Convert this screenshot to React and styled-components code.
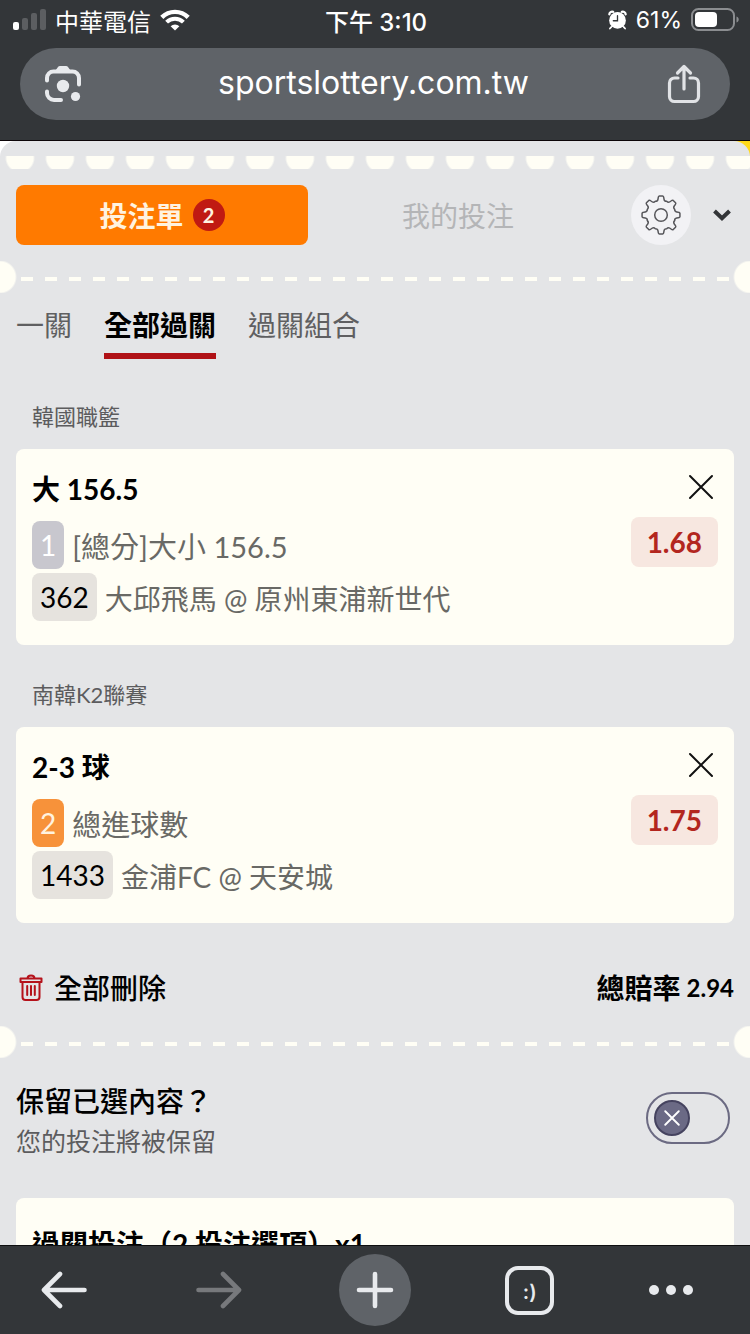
import React, { useState } from 'react';
import styled, { createGlobalStyle } from 'styled-components';

const GlobalStyle = createGlobalStyle`
  * {
    box-sizing: border-box;
  }

  body {
    margin: 0;
    background-color: #333639;
    font-family: Lato, 'Noto Sans CJK TC', sans-serif;
  }

  button {
    padding: 0;
    border: none;
    background: none;
    color: inherit;
    font: inherit;
    cursor: pointer;
  }

  svg {
    display: block;
  }
`;

const Screen = styled.div`
  display: flex;
  flex-direction: column;
  height: 100vh;
`;

const BrowserTop = styled.header`
  padding-bottom: 20px;
  border-bottom: 1px solid #0c0508;
  background-color: #333639;
  color: #fff;
  font-family: Inter, 'Noto Sans CJK TC', sans-serif;
`;

const StatusBar = styled.div`
  display: grid;
  grid-template-columns: 1fr auto 1fr;
  align-items: center;
  height: 40px;
  margin-bottom: 8px;
  padding: 0 11px 0 13px;
  font-size: 24px;
`;

const StatusGroup = styled.div`
  display: flex;
  align-items: center;
  justify-content: ${({ $end }) => $end ? 'flex-end' : 'flex-start'};
  gap: 9px;
`;

const Clock = styled.time`
  font-weight: 500;
`;

const BatteryLevel = styled.span`
  font-size: 23px;
`;

const Omnibox = styled.div`
  display: flex;
  align-items: center;
  justify-content: space-between;
  height: 72px;
  margin: 0 20px;
  padding: 0 24px 0 21px;
  border-radius: 36px;
  background-color: #5f6368;
`;

const Address = styled.span`
  padding-bottom: 2px;
  font-size: 32px;
  line-height: 40px;
`;

const Page = styled.main`
  flex: 1;
  min-height: 0;
  overflow-y: auto;
  scrollbar-width: none;
  background: linear-gradient(to right, #fff 50%, #ffd91a 50%);
`;

const Panel = styled.div`
  min-height: 100%;
  padding-top: 15px;
  border-radius: 16px 16px 0 0;
  background-color: #e4e5e7;
`;

const Scallops = styled.div`
  height: 13px;
  background: radial-gradient(circle at 20px 2px, #fffef5 13px, transparent 15px) 0 0 / 40px 13px repeat-x;
`;

const SlipHeader = styled.div`
  display: flex;
  align-items: center;
  padding: 16px;
`;

const SlipTabs = styled.div`
  display: flex;
  flex: 1;
  gap: 4px;
  margin-right: 27px;
`;

const SlipTab = styled.button`
  display: flex;
  flex: 1;
  align-items: center;
  justify-content: center;
  gap: 9px;
  height: 60px;
  border-radius: 8px;

  && {
    background-color: ${({ $active }) => $active ? '#ff7a00' : 'transparent'};
    color: ${({ $active }) => $active ? '#fff3e0' : '#b4b5b7'};
    font-size: 28px;
    font-weight: ${({ $active }) => $active ? 700 : 400};
  }
`;

const Count = styled.span`
  width: 32px;
  border-radius: 16px;
  background-color: #c01a12;
  font-size: 20px;
  line-height: 32px;
`;

const SettingsButton = styled.button`
  && {
    display: grid;
    place-items: center;
    width: 60px;
    height: 60px;
    margin-right: 19px;
    border-radius: 50%;
    background-color: #f2f2f5;
  }
`;

const CollapseButton = styled.button`
  display: grid;
  place-items: center;
  width: 24px;
  height: 60px;
`;

const TearLine = styled.div`
  display: flex;
  align-items: center;
  height: 32px;
  background:
    radial-gradient(circle at 0 50%, #fffef5 15px, transparent 17px),
    radial-gradient(circle at 100% 50%, #fffef5 15px, transparent 17px);

  &::before {
    content: '';
    flex: 1;
    height: 4px;
    margin: 4px 21px 0;
    background: repeating-linear-gradient(to right, #fffef5 0 12px, transparent 12px 24px);
  }
`;

const ModeTabs = styled.nav`
  display: flex;
  gap: 32px;
  padding: 12px 16px 0;
`;

const ModeTab = styled.button`
  && {
    padding-bottom: 8px;
    border-bottom: 6px solid ${({ $active }) => $active ? '#b01217' : 'transparent'};
    color: ${({ $active }) => $active ? '#000' : '#5f5f61'};
    font-size: 28px;
    font-weight: ${({ $active }) => $active ? 700 : 400};
    line-height: 40px;
  }
`;

const Bets = styled.div`
  display: flex;
  flex-direction: column;
  gap: 34px;
  padding: 42px 16px 0;
`;

const League = styled.h2`
  margin: 0 16px 16px;
  color: #5c5c5e;
  font-size: 22px;
  font-weight: 400;
  line-height: 32px;
`;

const Card = styled.article`
  display: flex;
  justify-content: space-between;
  padding: 16px 16px 24px;
  border-radius: 8px;
  background-color: #fffef5;
`;

const Pick = styled.h3`
  margin: 0 0 8px;
  font-size: 28px;
  font-weight: 700;
  line-height: 48px;
`;

const Line = styled.div`
  display: flex;
  gap: 8px;
  height: 48px;
  margin-top: 4px;
  line-height: 48px;
`;

const LineText = styled.span`
  padding-top: 2px;
  color: #696965;
  font-size: ${({ $large }) => $large ? 29 : 28}px;
`;

const tagColors = {
  grey: ['#c8c7ce', '#fff'],
  orange: ['#f7923a', '#fff3e0'],
  sand: ['#e6e3de', '#000'],
};

const Tag = styled.span`
  padding: 0 8px;
  border-radius: 8px;
  background-color: ${({ $tone }) => tagColors[$tone][0]};
  color: ${({ $tone }) => tagColors[$tone][1]};
  font-size: 28px;
`;

const CardSide = styled.div`
  display: flex;
  flex-direction: column;
  align-items: flex-end;
  gap: 8px;
`;

const CloseButton = styled.button`
  display: grid;
  place-items: center;
  width: 34px;
  height: 44px;
`;

const Odds = styled.span`
  padding: 0 16px;
  border-radius: 8px;
  background-color: #f7e7e0;
  color: #b3261e;
  font-size: 28px;
  font-weight: 700;
  line-height: 50px;
`;

const Totals = styled.div`
  display: flex;
  align-items: center;
  justify-content: space-between;
  height: 40px;
  margin: 45px 16px 18px;
  font-size: 28px;
  line-height: 40px;
`;

const ClearButton = styled.button`
  display: flex;
  align-items: center;
  gap: 8px;

  && {
    font-weight: 500;
  }
`;

const TotalOdds = styled.strong`
  display: flex;
  gap: 6px;

  span {
    font-size: 24px;
  }
`;

const KeepRow = styled.label`
  display: flex;
  align-items: center;
  justify-content: space-between;
  padding: 23px 20px 37px 16px;
  line-height: 40px;
`;

const KeepTitle = styled.div`
  font-size: 28px;
  font-weight: 500;
`;

const KeepHint = styled.div`
  color: #5c5c5e;
  font-size: 25px;
`;

const Switch = styled.span`
  display: flex;
  align-items: center;
  width: 84px;
  height: 52px;
  margin-bottom: 6px;
  padding: 0 6px;
  border: 2px solid #6b6a82;
  border-radius: 26px;

  input {
    position: absolute;
    opacity: 0;
  }
`;

const Knob = styled.span`
  display: grid;
  place-items: center;
  width: 36px;
  height: 36px;
  margin-left: ${({ $on }) => $on ? 'auto' : '0'};
  border: 2px solid #45435f;
  border-radius: 50%;
  background-color: #6b6a85;
`;

const StakeCard = styled.section`
  margin: 0 16px;
  padding: 22px 16px;
  border-radius: 8px 8px 0 0;
  background-color: #fffef5;
`;

const Toolbar = styled.nav`
  display: flex;
  flex-shrink: 0;
  align-items: center;
  justify-content: space-between;
  height: 89px;
  padding: 0 57px 0 28px;
  border-top: 1px solid #0e0f10;
  background-color: #333639;
  color: #e8eaed;
`;

const ToolButton = styled.button`
  display: grid;
  place-items: center;
  width: ${({ $narrow }) => $narrow ? 44 : 72}px;
  height: 72px;
  border-radius: 50%;

  && {
    background-color: ${({ $filled }) => $filled ? '#5f6368' : 'transparent'};
  }

  &:disabled {
    color: #77797c;
  }
`;

const TabCount = styled.span`
  width: 49px;
  height: 49px;
  border: 4px solid #e8eaed;
  border-radius: 13px;
  font-family: Inter, sans-serif;
  font-size: 20px;
  font-weight: 600;
  line-height: 44px;
`;

const bets = [
  {
    league: '韓國職籃',
    pick: '大 156.5',
    order: 1,
    tone: 'grey',
    market: '[總分]大小 156.5',
    code: '362',
    match: '大邱飛馬 @ 原州東浦新世代',
    odds: '1.68',
  },
  {
    league: '南韓K2聯賽',
    pick: '2-3 球',
    order: 2,
    tone: 'orange',
    market: '總進球數',
    code: '1433',
    match: '金浦FC @ 天安城',
    odds: '1.75',
  },
];

const modes = ['一關', '全部過關', '過關組合'];

const SignalIcon = () => (
  <svg width="33" height="22" viewBox="0 0 33 22" fill="#5c5e61">
    <rect x="0" y="13" width="6" height="8" rx="2" fill="#fff" />
    <rect x="9" y="9" width="6" height="12" rx="2" />
    <rect x="18" y="4" width="6" height="17" rx="2" />
    <rect x="27" y="0" width="6" height="21" rx="2" />
  </svg>
);

const WifiIcon = () => (
  <svg width="30" height="22" viewBox="0 0 30 22" fill="none" stroke="#fff">
    <path d="M1.8 8.4a18.6 18.6 0 0 1 26.4 0" strokeWidth="4.4" />
    <path d="M6.6 13.2a11.9 11.9 0 0 1 16.8 0" strokeWidth="4" />
    <path d="M15 21.6l-4.4-4.4a6.3 6.3 0 0 1 8.8 0z" fill="#fff" stroke="none" />
  </svg>
);

const AlarmIcon = () => (
  <svg width="19" height="20" viewBox="0 0 20 20" fill="none">
    <circle cx="10" cy="10.4" r="8.8" fill="#fff" />
    <path d="M1.4 4A3 3 0 0 1 5.4 1.4M18.6 4A3 3 0 0 0 14.6 1.4" stroke="#fff" strokeWidth="2.4" strokeLinecap="round" />
    <path d="M3.6 17.2L2 19M16.4 17.2L18 19" stroke="#fff" strokeWidth="1.8" strokeLinecap="round" />
    <path d="M10 5.4v5.4H5.6" stroke="#333639" strokeWidth="1.4" strokeLinecap="round" />
  </svg>
);

const BatteryIcon = () => (
  <svg width="48" height="24" viewBox="0 0 48 24" fill="none">
    <rect x="1" y="1" width="42" height="21" rx="6.5" stroke="#8b8d90" strokeWidth="2" />
    <rect x="4" y="4" width="22" height="15" rx="4" fill="#fff" />
    <path d="M45.5 8.5c1.6.6 2.2 1.6 2.2 3s-.6 2.4-2.2 3z" fill="#8b8d90" />
  </svg>
);

const LensIcon = () => (
  <svg width="44" height="38" viewBox="-3 0 44 38" fill="none" stroke="#e8eaed" strokeWidth="4" strokeLinecap="round">
    <path d="M3 15.5V13a6.500 6.500 0 0 1 6.500-6.500h19A6.500 6.500 0 0 1 35 13v6.500" />
    <path d="M3 26.500V28a7 7 0 0 0 7 7h7" />
    <path d="M11.500 5.500l2.300-3.300Q14.600 1 16 1h6q1.400 0 2.200 1.200l2.300 3.300z" fill="#e8eaed" stroke="none" />
    <circle cx="19" cy="21" r="6.200" fill="#e8eaed" stroke="none" />
    <circle cx="31.5" cy="31.5" r="4.600" fill="#e8eaed" stroke="none" />
  </svg>
);

const ShareIcon = () => (
  <svg width="44" height="40" viewBox="0 0 44 40" fill="none" stroke="#e1e3e6" strokeWidth="3.2" strokeLinecap="round" strokeLinejoin="round">
    <path d="M16 14h-3.5a5 5 0 0 0-5 5v13.5a5 5 0 0 0 5 5h19a5 5 0 0 0 5-5V19a5 5 0 0 0-5-5H28" />
    <path d="M22 25V3M15.5 9L22 2.5 28.5 9" />
  </svg>
);

const gearTeeth = [0, 45, 90, 135, 180, 225, 270, 315];

// one tooth and the valley after it, repeated round the hub
const gearPath = () => {
  const at = (deg, r) => {
    const a = ((deg - 90) * Math.PI) / 180;
    return `${(20 + r * Math.cos(a)).toFixed(2)} ${(20 + r * Math.sin(a)).toFixed(2)}`;
  };
  const parts = gearTeeth.map((t, i) =>
    `${i ? 'L' : 'M'}${at(t - 5, 19)} L${at(t + 5, 19)} Q${at(t + 8, 19)} ${at(t + 9, 17.6)}` +
    ` L${at(t + 11, 16)} Q${at(t + 14, 14)} ${at(t + 22.5, 14.8)} Q${at(t + 31, 14)} ${at(t + 34, 16)}` +
    ` L${at(t + 36, 17.6)} Q${at(t + 37, 19)} ${at(t + 40, 19)}`
  );
  return parts.join(' ') + ' Z';
};

const GearIcon = () => (
  <svg width="40" height="40" viewBox="0 0 40 40" fill="none" stroke="#57575b" strokeWidth="1.5">
    <path d={gearPath()} strokeLinejoin="round" />
    <circle cx="20" cy="20" r="6.3" />
  </svg>
);

const ChevronIcon = () => (
  <svg width="20" height="14" viewBox="0 0 20 14" fill="none" stroke="#333538" strokeWidth="4">
    <path d="M2.5 3L10 10.2 17.5 3" />
  </svg>
);

const CrossIcon = ({ size = 26, color = '#111', weight = 2 }) => (
  <svg width={size} height={size} viewBox="0 0 26 26" fill="none" stroke={color} strokeWidth={weight} strokeLinecap="round">
    <path d="M2 2l22 22M24 2L2 24" />
  </svg>
);

const TrashIcon = () => (
  <svg width="30" height="28" viewBox="0 0 30 28" fill="none" stroke="#b5121b" strokeWidth="2" strokeLinejoin="round">
    <path d="M4.500 4.500h21v3.500h-21zM11.500 4.500c0-4 7-4 7 0" />
    <path d="M6.5 8v15a3 3 0 0 0 3 3h11a3 3 0 0 0 3-3V8" />
    <path d="M11.2 12v9M15 12v9M18.800 12v9" strokeLinecap="round" />
  </svg>
);

const ArrowIcon = ({ flip }) => (
  <svg width="46" height="38" viewBox="0 0 46 38" fill="none" stroke="currentColor" strokeWidth="4.6" strokeLinecap="round" strokeLinejoin="round">
    <path d={flip ? 'M2.5 19h40M27 3l16 16-16 16' : 'M43.5 19h-40M19 3L3 19l16 16'} />
  </svg>
);

const PlusIcon = () => (
  <svg width="38" height="38" viewBox="0 0 38 38" fill="none" stroke="currentColor" strokeWidth="4.6" strokeLinecap="round">
    <path d="M19 3v32M3 19h32" />
  </svg>
);

const DotsIcon = () => (
  <svg width="44" height="12" viewBox="0 0 44 12" fill="currentColor">
    <circle cx="5" cy="6" r="5" />
    <circle cx="22" cy="6" r="5" />
    <circle cx="39" cy="6" r="5" />
  </svg>
);

const BetCard = ({ bet }) => (
  <section>
    <League>{bet.league}</League>
    <Card>
      <div>
        <Pick>{bet.pick}</Pick>
        <Line>
          <Tag $tone={bet.tone}>{bet.order}</Tag>
          <LineText $large>{bet.market}</LineText>
        </Line>
        <Line>
          <Tag $tone="sand">{bet.code}</Tag>
          <LineText>{bet.match}</LineText>
        </Line>
      </div>
      <CardSide>
        <CloseButton aria-label="移除"><CrossIcon /></CloseButton>
        <Odds>{bet.odds}</Odds>
      </CardSide>
    </Card>
  </section>
);

const App = () => {
  const [mode, setMode] = useState('全部過關');
  const [keep, setKeep] = useState(false);

  return (
    <Screen>
      <GlobalStyle />
      <BrowserTop>
        <StatusBar>
          <StatusGroup>
            <SignalIcon />
            <span>中華電信</span>
            <WifiIcon />
          </StatusGroup>
          <Clock>下午 3:10</Clock>
          <StatusGroup $end>
            <AlarmIcon />
            <BatteryLevel>61%</BatteryLevel>
            <BatteryIcon />
          </StatusGroup>
        </StatusBar>
        <Omnibox>
          <button aria-label="Lens"><LensIcon /></button>
          <Address>sportslottery.com.tw</Address>
          <button aria-label="分享"><ShareIcon /></button>
        </Omnibox>
      </BrowserTop>

      <Page>
        <Panel>
          <Scallops />
          <SlipHeader>
            <SlipTabs>
              <SlipTab $active>投注單<Count>2</Count></SlipTab>
              <SlipTab>我的投注</SlipTab>
            </SlipTabs>
            <SettingsButton aria-label="設定"><GearIcon /></SettingsButton>
            <CollapseButton aria-label="收合"><ChevronIcon /></CollapseButton>
          </SlipHeader>
          <TearLine />
          <ModeTabs>
            {modes.map((name) => (
              <ModeTab key={name} $active={name === mode} onClick={() => setMode(name)}>{name}</ModeTab>
            ))}
          </ModeTabs>
          <Bets>
            {bets.map((bet) => <BetCard key={bet.code} bet={bet} />)}
          </Bets>
          <Totals>
            <ClearButton><TrashIcon />全部刪除</ClearButton>
            <TotalOdds>總賠率 <span>2.94</span></TotalOdds>
          </Totals>
          <TearLine />
          <KeepRow>
            <div>
              <KeepTitle>保留已選內容？</KeepTitle>
              <KeepHint>您的投注將被保留</KeepHint>
            </div>
            <Switch>
              <input type="checkbox" checked={keep} onChange={() => setKeep(!keep)} />
              <Knob $on={keep}><CrossIcon size={16} color="#fff" weight={3} /></Knob>
            </Switch>
          </KeepRow>
          <StakeCard>
            <Pick>過關投注（2 投注選項）x1</Pick>
          </StakeCard>
        </Panel>
      </Page>

      <Toolbar>
        <ToolButton aria-label="上一頁"><ArrowIcon /></ToolButton>
        <ToolButton aria-label="下一頁" disabled><ArrowIcon flip /></ToolButton>
        <ToolButton aria-label="新分頁" $filled><PlusIcon /></ToolButton>
        <ToolButton><TabCount>:)</TabCount></ToolButton>
        <ToolButton aria-label="更多" $narrow><DotsIcon /></ToolButton>
      </Toolbar>
    </Screen>
  );
};

export default App;
